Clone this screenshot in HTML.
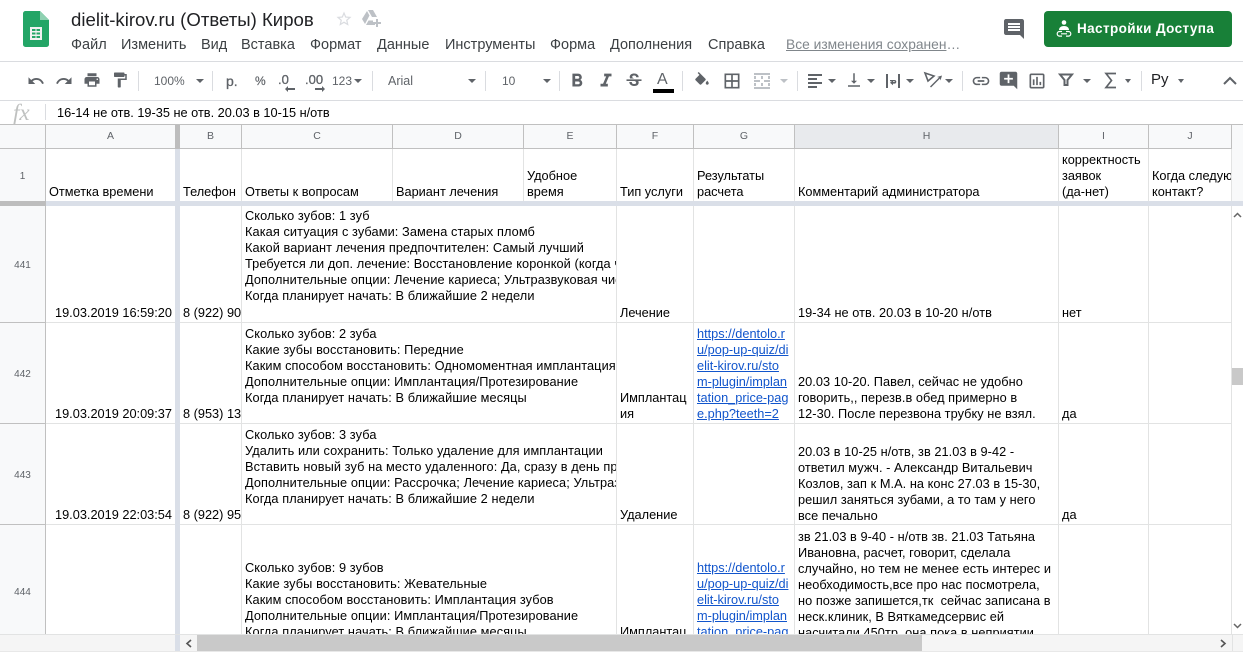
<!DOCTYPE html>
<html lang="ru"><head><meta charset="utf-8"><title>dielit-kirov.ru</title>
<style>
*{box-sizing:border-box}
html,body{margin:0;padding:0;background:#fff}
#p{position:relative;width:1243px;height:652px;overflow:hidden;background:#fff;font-family:"Liberation Sans",sans-serif;color:#000}
.a{position:absolute}
.m{position:absolute;top:37px;font-size:14.500px;line-height:16px;color:#3c4043;white-space:nowrap}
.tb{position:absolute;font-size:12px;line-height:16px;color:#5f6368;white-space:nowrap;top:73px}
.ic{position:absolute;fill:#5f6368}
.ar{position:absolute;top:79px;width:0;height:0;border-left:4px solid transparent;border-right:4px solid transparent;border-top:4px solid #5f6368}
.sp{position:absolute;top:71px;width:1px;height:20px;background:#dadce0}
.h{position:absolute;top:125px;height:24px;background:#f8f9fa;border-right:1px solid #c0c0c0;border-bottom:1px solid #c0c0c0;font-size:10.500px;line-height:23px;text-align:center;color:#5f6368}
.r{position:absolute;left:0;width:46px;background:#f8f9fa;border-right:1px solid #c0c0c0;border-bottom:1px solid #c0c0c0;font-size:10px;text-align:center;color:#5f6368;display:flex;align-items:center;justify-content:center;padding-top:3px}
.c{position:absolute;overflow:hidden;font-size:12.750px;line-height:16px;padding-left:3px;white-space:pre;color:#000;margin-top:1px}
.q{letter-spacing:.09px}
.n{letter-spacing:.05px}
.vl{position:absolute;top:149px;width:1px;height:486px;background:#e2e3e3}
.hl{position:absolute;left:46px;width:1186px;height:1px;background:#e2e3e3}
a{color:#1155cc;text-decoration:underline}
</style></head><body><div id="p">

<svg class="a" style="left:23px;top:11px" width="26" height="36" viewBox="0 0 26 36"><path d="M2.500 0H17l9 9v24.500a2.500 2.500 0 0 1-2.500 2.500h-21A2.500 2.500 0 0 1 0 33.500V2.500A2.500 2.500 0 0 1 2.500 0z" fill="#23a566"/><path d="M17 0l9 9h-9z" fill="#8ed1b1"/><path d="M7 16h12v13H7z" fill="#f1f1f1"/><path d="M9 18h3.500v2H9zM13.500 18H17v2h-3.500zM9 21.500h3.500v2H9zM13.500 21.500H17v2h-3.500zM9 25h3.500v2H9zM13.500 25H17v2h-3.500z" fill="#23a566"/></svg>
<div class="a" style="left:71px;top:9px;font-size:18.600px;line-height:22px;color:#202124;white-space:nowrap">dielit-kirov.ru (Ответы) Киров</div>
<svg class="a" style="left:335px;top:10px" width="18" height="18" viewBox="0 0 24 24"><path fill="#dadce0" d="M22 9.240l-7.190-.62L12 2 9.190 8.630 2 9.240l5.460 4.730L5.820 21 12 17.270 18.180 21l-1.630-7.030L22 9.240zM12 15.400l-3.760 2.270 1-4.280-3.320-2.880 4.380-.38L12 6.100l1.710 4.040 4.380.38-3.320 2.880 1 4.280L12 15.400z"/></svg>
<svg class="a" style="left:362px;top:10px" width="19" height="17" viewBox="0 0 19 17"><path fill="#bdc1c6" d="M6 0h5l4 7h-5zM5 1l2.500 4.500L3 14 0 9zM4 15l2.500-4.500H11v2.500h2v2z"/><path fill="#bdc1c6" d="M14 9h2v3h3v2h-3v3h-2v-3h-3v-2h3z"/></svg>

<div class="m" style="left:71px">Файл</div>
<div class="m" style="left:121px">Изменить</div>
<div class="m" style="left:201px">Вид</div>
<div class="m" style="left:241px">Вставка</div>
<div class="m" style="left:310px">Формат</div>
<div class="m" style="left:377px">Данные</div>
<div class="m" style="left:445px">Инструменты</div>
<div class="m" style="left:550px">Форма</div>
<div class="m" style="left:610px">Дополнения</div>
<div class="m" style="left:708px">Справка</div>
<div class="m" style="left:786px;font-size:13.800px;color:#80868b;text-decoration:underline">Все изменения сохранен<span style="display:inline-block;text-decoration:none">…</span></div>

<svg class="ic" style="left:1002px;top:17px" width="24" height="24" viewBox="0 0 24 24"><path d="M21.990 4c0-1.100-.89-2-1.990-2H4c-1.100 0-2 .9-2 2v12c0 1.100.9 2 2 2h14l4 4-.01-18zM18 14H6v-2h12v2zm0-3H6V9h12v2zm0-3H6V6h12v2z"/></svg>
<div class="a" style="left:1044px;top:11px;width:188px;height:36px;background:#188038;border-radius:4px"></div>
<svg class="a" style="left:1056px;top:19px" width="16" height="20" viewBox="0 0 16 20"><circle cx="8" cy="3.500" r="2.300" fill="#fff"/><path d="M3 11c0-2.500 2-4 5-4s5 1.500 5 4z" fill="#fff"/><path d="M6 12.500H3.500a2.300 2.300 0 0 0 0 4.600H6M10 12.500h2.500a2.300 2.300 0 0 1 0 4.600H10M5 14.800h6" fill="none" stroke="#fff" stroke-width="1.200"/></svg>
<div class="a" style="left:1077px;top:20px;font-size:13.500px;line-height:17px;font-weight:bold;letter-spacing:.4px;color:#fff;white-space:nowrap">Настройки Доступа</div>

<div class="a" style="left:0;top:61px;width:1243px;height:1px;background:#dadce0"></div>
<div class="a" style="left:0;top:100px;width:1243px;height:1px;background:#dadce0"></div>

<svg class="ic" style="left:27px;top:72px" width="18" height="18" viewBox="0 0 24 24"><path d="M12.500 8c-2.650 0-5.050.99-6.900 2.600L2 7v9h9l-3.620-3.620c1.390-1.160 3.160-1.880 5.120-1.880 3.540 0 6.550 2.310 7.600 5.500l2.370-.78C21.080 11.030 17.150 8 12.500 8z"/></svg>
<svg class="ic" style="left:55px;top:72px" width="18" height="18" viewBox="0 0 24 24"><path d="M18.400 10.600C16.550 8.990 14.150 8 11.500 8c-4.650 0-8.580 3.030-9.960 7.220L3.900 16c1.050-3.190 4.050-5.500 7.600-5.500 1.950 0 3.730.72 5.120 1.880L13 16h9V7l-3.600 3.600z"/></svg>
<svg class="ic" style="left:83px;top:71px" width="18" height="18" viewBox="0 0 24 24"><path d="M19 8H5c-1.660 0-3 1.340-3 3v6h4v4h12v-4h4v-6c0-1.660-1.340-3-3-3zm-3 11H8v-5h8v5zm3-7c-.55 0-1-.45-1-1s.45-1 1-1 1 .45 1 1-.45 1-1 1zm-1-9H6v4h12V3z"/></svg>
<svg class="ic" style="left:111px;top:71px" width="18" height="18" viewBox="0 0 24 24"><path d="M18 4V3c0-.55-.45-1-1-1H5c-.55 0-1 .45-1 1v4c0 .55.45 1 1 1h12c.55 0 1-.45 1-1V6h1v4H9v11c0 .55.45 1 1 1h2c.55 0 1-.45 1-1v-9h8V4h-3z"/></svg>
<div class="sp" style="left:138px"></div>
<div class="tb" style="left:154px">100%</div><div class="ar" style="left:196px"></div>
<div class="sp" style="left:212px"></div>
<div class="tb" style="left:226px;font-size:14px;-webkit-text-stroke:.3px #5f6368">р.</div>
<div class="tb" style="left:255px;font-size:12px;-webkit-text-stroke:.2px #5f6368">%</div>
<div class="tb" style="left:278px;font-size:13px;-webkit-text-stroke:.3px #5f6368;top:72px">.0</div>
<svg class="ic" style="left:285px;top:86px" width="10" height="6" viewBox="0 0 10 6"><path d="M0 3l3-3v2h7v2H3v2z"/></svg>
<div class="tb" style="left:305px;font-size:13px;-webkit-text-stroke:.3px #5f6368;top:72px">.00</div>
<svg class="ic" style="left:315px;top:86px" width="10" height="6" viewBox="0 0 10 6"><path d="M10 3L7 0v2H0v2h7v2z"/></svg>
<div class="tb" style="left:332px">123</div><div class="ar" style="left:354px;top:79px"></div>
<div class="sp" style="left:372px"></div>
<div class="tb" style="left:388px;font-size:12.500px">Arial</div><div class="ar" style="left:468px"></div>
<div class="sp" style="left:485px"></div>
<div class="tb" style="left:502px">10</div><div class="ar" style="left:543px"></div>
<div class="sp" style="left:559px"></div>
<svg class="ic" style="left:566px;top:70px" width="22" height="22" viewBox="0 0 24 24"><path d="M15.600 10.790c.97-.67 1.650-1.770 1.650-2.790 0-2.260-1.750-4-4-4H7v14h7.040c2.090 0 3.710-1.700 3.710-3.790 0-1.520-.86-2.820-2.150-3.420zM10 6.500h3c.83 0 1.500.67 1.500 1.500s-.67 1.500-1.500 1.500h-3v-3zm3.500 9H10v-3h3.500c.83 0 1.500.67 1.500 1.500s-.67 1.500-1.500 1.500z"/></svg>
<svg class="ic" style="left:595px;top:70px" width="22" height="22" viewBox="0 0 24 24"><path d="M10 4v3h2.210l-3.420 8H6v3h8v-3h-2.210l3.420-8H18V4z"/></svg>
<svg class="ic" style="left:624px;top:71px" width="20" height="20" viewBox="0 0 24 24"><path d="M7.240 8.750c-.26-.48-.39-1.030-.39-1.670 0-.61.13-1.160.4-1.670.26-.5.63-.93 1.110-1.290.48-.35 1.050-.63 1.700-.83.66-.19 1.390-.29 2.180-.29.81 0 1.540.11 2.210.34.66.22 1.230.54 1.690.94.47.4.83.88 1.080 1.430.25.55.38 1.150.38 1.810h-3.010c0-.31-.05-.59-.15-.85-.09-.27-.24-.49-.44-.68-.2-.19-.45-.33-.75-.44-.3-.1-.66-.16-1.060-.16-.39 0-.74.04-1.030.13-.29.09-.53.21-.72.36-.19.16-.34.34-.44.55-.1.21-.15.43-.15.66 0 .48.25.88.74 1.210.38.25.77.48 1.410.7H7.390c-.05-.08-.11-.17-.15-.25zM21 12v-2H3v2h9.620c.18.07.4.14.55.2.37.17.66.34.87.51.21.17.35.36.43.57.07.2.11.43.11.69 0 .23-.05.45-.14.66-.09.2-.23.38-.42.53-.19.15-.42.26-.71.35-.29.08-.63.13-1.010.13-.43 0-.83-.04-1.180-.13s-.66-.23-.91-.42c-.25-.19-.45-.44-.59-.75-.14-.31-.25-.76-.25-1.210H6.400c0 .55.08 1.130.24 1.580.16.45.37.85.65 1.210.28.35.6.66.98.92.37.26.78.48 1.220.65.44.17.9.3 1.380.39.48.08.96.13 1.440.13.8 0 1.530-.09 2.180-.28s1.210-.45 1.670-.79c.46-.34.82-.77 1.070-1.270s.38-1.070.38-1.710c0-.6-.1-1.140-.31-1.610-.05-.11-.11-.23-.17-.33H21z"/></svg>
<div class="tb" style="left:657px;top:72px;font-size:16px;color:#5f6368">A</div>
<div class="a" style="left:653px;top:89px;width:21px;height:4px;background:#000"></div>
<div class="sp" style="left:682px"></div>
<svg class="ic" style="left:693px;top:72px" width="18" height="18" viewBox="0 0 24 24"><path d="M16.560 8.940L7.620 0 6.210 1.410l2.380 2.380-5.150 5.150c-.59.59-.59 1.540 0 2.120l5.500 5.500c.29.29.68.44 1.060.44s.77-.15 1.060-.44l5.500-5.500c.59-.58.59-1.530 0-2.120zM19 11.500s-2 2.170-2 3.500c0 1.100.9 2 2 2s2-.9 2-2c0-1.330-2-3.500-2-3.500z"/></svg>
<svg class="ic" style="left:722px;top:71px" width="20" height="20" viewBox="0 0 24 24"><path d="M3 3v18h18V3H3zm8 16H5v-6h6v6zm0-8H5V5h6v6zm8 8h-6v-6h6v6zm0-8h-6V5h6v6z"/></svg>
<svg class="a" style="left:753px;top:72px" width="18" height="18" viewBox="0 0 18 18"><path fill="#bdc1c6" d="M1 1h16v2H1zM1 15h16v2H1zM1 4h2v3H1zM15 4h2v3h-2zM1 11h2v3H1zM15 11h2v3h-2zM8 4h2v3H8zM8 11h2v3H8zM1 8h6v2H1zM11 8h6v2h-6z"/></svg>
<div class="ar" style="left:780px;border-top-color:#bdc1c6"></div>
<div class="sp" style="left:797px"></div>
<svg class="ic" style="left:806px;top:72px" width="18" height="18" viewBox="0 0 18 18"><path d="M2 2h14v2H2zM2 6h9v2H2zM2 10h14v2H2zM2 14h9v2H2z"/></svg><div class="ar" style="left:828px"></div>
<svg class="ic" style="left:845px;top:71px" width="18" height="18" viewBox="0 0 24 24"><path d="M16 13h-3V3h-2v10H8l4 4 4-4zM4 19v2h16v-2H4z"/></svg><div class="ar" style="left:867px"></div>
<svg class="ic" style="left:884px;top:72px" width="18" height="18" viewBox="0 0 18 18"><path d="M2 2h2v14H2zM14 2h2v14h-2zM6 8h4.500a1.800 1.800 0 0 1 0 3.600H9v1.600l-3-2.400 3-2.400v1.600h1.500a.4.4 0 0 0 0-.8H6z"/></svg><div class="ar" style="left:906px"></div>
<svg class="a" style="left:923px;top:71px" width="20" height="20" viewBox="0 0 20 20"><path fill="none" stroke="#5f6368" stroke-width="1.600" d="M2 2l9 3-6 5z"/><path fill="#5f6368" d="M7 15.500L16 6.500l-2-.5 5-1.500-1.500 5-.5-2-9 9z"/></svg><div class="ar" style="left:945px"></div>
<div class="sp" style="left:962px"></div>
<svg class="ic" style="left:971px;top:71px" width="20" height="20" viewBox="0 0 24 24"><path d="M3.900 12c0-1.710 1.390-3.100 3.100-3.100h4V7H7c-2.760 0-5 2.240-5 5s2.240 5 5 5h4v-1.900H7c-1.710 0-3.100-1.390-3.100-3.100zM8 13h8v-2H8v2zm9-6h-4v1.900h4c1.710 0 3.100 1.390 3.100 3.100s-1.390 3.100-3.100 3.100h-4V17h4c2.760 0 5-2.240 5-5s-2.240-5-5-5z"/></svg>
<svg class="ic" style="left:998px;top:70px" width="21" height="21" viewBox="0 0 24 24"><path d="M21.990 4c0-1.100-.89-2-1.990-2H4c-1.100 0-2 .9-2 2v12c0 1.100.9 2 2 2h14l4 4-.01-18zM17 11h-4v4h-2v-4H7V9h4V5h2v4h4v2z"/></svg>
<svg class="ic" style="left:1027px;top:71px" width="20" height="20" viewBox="0 0 24 24"><path d="M19 3H5c-1.100 0-2 .9-2 2v14c0 1.100.9 2 2 2h14c1.100 0 2-.9 2-2V5c0-1.100-.9-2-2-2zm0 16H5V5h14v14zM9 10H7v7h2zm4-3h-2v10h2zm4 6h-2v4h2z"/></svg>
<svg class="a" style="left:1058px;top:72px" width="16" height="16" viewBox="0 0 16 16"><path fill="none" stroke="#5f6368" stroke-width="2" d="M2 2.500h12L9.500 8v5h-3V8z"/></svg><div class="ar" style="left:1083px"></div>
<svg class="a" style="left:1104px;top:72px" width="13" height="17" viewBox="0 0 13 17"><path fill="none" stroke="#5f6368" stroke-width="1.700" d="M12 1.500H2L7.500 8.500 2 15.500h10"/></svg><div class="ar" style="left:1125px;border-left-width:3px;border-right-width:3px"></div>
<div class="sp" style="left:1141px"></div>
<div class="tb" style="left:1151px;top:71px;font-size:15px;color:#202124;line-height:18px">Ру</div><div class="ar" style="left:1178px;border-left-width:3px;border-right-width:3px"></div>
<svg class="a" style="left:1222px;top:75px" width="16" height="11" viewBox="0 0 16 11"><path fill="none" stroke="#5f6368" stroke-width="2" d="M2 9l6-6 6 6"/></svg>

<div class="a" style="left:13px;top:102px;font-family:'Liberation Serif',serif;font-style:italic;font-size:23px;line-height:21px;color:#bfc1c0">fx</div>
<div class="a" style="left:45px;top:104px;width:1px;height:16px;background:#dadce0"></div>
<div class="a" style="left:57px;top:105px;font-size:12.750px;line-height:16px;white-space:nowrap;color:#000">16-14 не отв. 19-35 не отв. 20.03 в 10-15 н/отв</div>

<div class="a" style="left:0;top:124px;width:1243px;height:1px;background:#c0c0c0"></div>
<div class="a" style="left:0;top:125px;width:46px;height:24px;background:#f8f9fa;border-right:1px solid #c0c0c0;border-bottom:1px solid #c0c0c0"></div>
<div class="h" style="left:46px;width:130px">A</div>
<div class="a" style="left:175px;top:125px;width:5px;height:24px;background:#bdbdbd"></div>
<div class="h" style="left:180px;width:62px">B</div>
<div class="h" style="left:242px;width:151px">C</div>
<div class="h" style="left:393px;width:131px">D</div>
<div class="h" style="left:524px;width:93px">E</div>
<div class="h" style="left:617px;width:77px">F</div>
<div class="h" style="left:694px;width:101px">G</div>
<div class="h" style="left:795px;width:264px;background:#e8eaed">H</div>
<div class="h" style="left:1059px;width:90px">I</div>
<div class="h" style="left:1149px;width:83px">J</div>
<div class="a" style="left:1232px;top:125px;width:11px;height:81px;background:#f8f9fa"></div>

<div class="vl" style="left:241px"></div><div class="vl" style="left:392px;height:52px"></div><div class="vl" style="left:523px;height:52px"></div><div class="vl" style="left:616px"></div><div class="vl" style="left:693px"></div><div class="vl" style="left:794px"></div><div class="vl" style="left:1058px"></div><div class="vl" style="left:1148px"></div><div class="vl" style="left:1231px"></div>
<div class="hl" style="top:322px"></div><div class="hl" style="top:423px"></div><div class="hl" style="top:524px"></div>

<div class="r" style="top:149px;height:52px;border-bottom:0">1</div>
<div class="r" style="top:206px;height:117px">441</div>
<div class="r" style="top:323px;height:101px">442</div>
<div class="r" style="top:424px;height:101px">443</div>
<div class="r" style="top:525px;height:132px;border-bottom:0">444</div>

<div class="a" style="left:0;top:201px;width:46px;height:5px;background:#bdbdbd"></div>
<div class="a" style="left:46px;top:201px;width:1197px;height:5px;background:#dadfe8"></div>
<div class="a" style="left:175px;top:149px;width:5px;height:486px;background:#dadfe8"></div>

<div class="c" style="left:46px;top:183px;width:129px;height:16px">Отметка времени</div>
<div class="c" style="left:180px;top:183px;width:61px;height:16px">Телефон</div>
<div class="c" style="left:242px;top:183px;width:150px;height:16px">Ответы к вопросам</div>
<div class="c" style="left:393px;top:183px;width:130px;height:16px">Вариант лечения</div>
<div class="c" style="left:524px;top:167px;width:92px;height:32px">Удобное
время</div>
<div class="c" style="left:617px;top:183px;width:76px;height:16px">Тип услуги</div>
<div class="c" style="left:694px;top:167px;width:100px;height:32px">Результаты
расчета</div>
<div class="c" style="left:795px;top:183px;width:263px;height:16px">Комментарий администратора</div>
<div class="c" style="left:1059px;top:151px;width:89px;height:48px">корректность
заявок
(да-нет)</div>
<div class="c" style="left:1149px;top:167px;width:82px;height:32px">Когда следующий
контакт?</div>

<div class="c" style="left:46px;top:304px;width:129px;height:16px;text-align:right;padding:0 3px 0 0">19.03.2019 16:59:20</div>
<div class="c" style="left:180px;top:304px;width:61px;height:16px">8 (922) 900-00-00</div>
<div class="c q" style="left:242px;top:207px;width:374px;height:114px">Сколько зубов: 1 зуб
Какая ситуация с зубами: Замена старых пломб
Какой вариант лечения предпочтителен: Самый лучший
Требуется ли доп. лечение: Восстановление коронкой (когда чуть
Дополнительные опции: Лечение кариеса; Ультразвуковая чистка
Когда планирует начать: В ближайшие 2 недели</div>
<div class="c" style="left:617px;top:304px;width:76px;height:16px">Лечение</div>
<div class="c n" style="left:795px;top:304px;width:263px;height:16px">19-34 не отв. 20.03 в 10-20 н/отв</div>
<div class="c" style="left:1059px;top:304px;width:89px;height:16px">нет</div>

<div class="c" style="left:46px;top:405px;width:129px;height:16px;text-align:right;padding:0 3px 0 0">19.03.2019 20:09:37</div>
<div class="c" style="left:180px;top:405px;width:61px;height:16px">8 (953) 130-00-00</div>
<div class="c q" style="left:242px;top:325px;width:374px;height:97px">Сколько зубов: 2 зуба
Какие зубы восстановить: Передние
Каким способом восстановить: Одномоментная имплантация
Дополнительные опции: Имплантация/Протезирование
Когда планирует начать: В ближайшие месяцы</div>
<div class="c" style="left:617px;top:389px;width:76px;height:32px">Имплантац
ия</div>
<div class="c" style="left:694px;top:325px;width:100px;height:97px"><a>https://dentolo.r
u/pop-up-quiz/di
elit-kirov.ru/sto
m-plugin/implan
tation_price-pag
e.php?teeth=2</a></div>
<div class="c n" style="left:795px;top:373px;width:263px;height:48px">20.03 10-20. Павел, сейчас не удобно
говорить,, перезв.в обед примерно в
12-30. После перезвона трубку не взял.</div>
<div class="c" style="left:1059px;top:405px;width:89px;height:16px">да</div>

<div class="c" style="left:46px;top:506px;width:129px;height:16px;text-align:right;padding:0 3px 0 0">19.03.2019 22:03:54</div>
<div class="c" style="left:180px;top:506px;width:61px;height:16px">8 (922) 950-00-00</div>
<div class="c q" style="left:242px;top:426px;width:374px;height:97px">Сколько зубов: 3 зуба
Удалить или сохранить: Только удаление для имплантации
Вставить новый зуб на место удаленного: Да, сразу в день приема
Дополнительные опции: Рассрочка; Лечение кариеса; Ультразвуковая чистка
Когда планирует начать: В ближайшие 2 недели</div>
<div class="c" style="left:617px;top:506px;width:76px;height:16px">Удаление</div>
<div class="c n" style="left:795px;top:443px;width:263px;height:80px">20.03 в 10-25 н/отв, зв 21.03 в 9-42 -
ответил мужч. - Александр Витальевич
Козлов, зап к М.А. на конс 27.03 в 15-30,
решил заняться зубами, а то там у него
все печально</div>
<div class="c" style="left:1059px;top:506px;width:89px;height:16px">да</div>

<div class="c q" style="left:242px;top:559px;width:374px;height:75px">Сколько зубов: 9 зубов
Какие зубы восстановить: Жевательные
Каким способом восстановить: Имплантация зубов
Дополнительные опции: Имплантация/Протезирование
Когда планирует начать: В ближайшие месяцы</div>
<div class="c" style="left:617px;top:623px;width:76px;height:16px">Имплантац</div>
<div class="c" style="left:694px;top:559px;width:100px;height:80px"><a>https://dentolo.r
u/pop-up-quiz/di
elit-kirov.ru/sto
m-plugin/implan
tation_price-pag</a></div>
<div class="c n" style="left:795px;top:528px;width:263px;height:112px">зв 21.03 в 9-40 - н/отв зв. 21.03 Татьяна
Ивановна, расчет, говорит, сделала
случайно, но тем не менее есть интерес и
необходимость,все про нас посмотрела,
но позже запишется,тк  сейчас записана в
неск.клиник, В Вяткамедсервис ей
насчитали 450тр, она пока в неприятии</div>

<div class="a" style="left:1232px;top:206px;width:11px;height:429px;background:#fff"></div>
<svg class="a" style="left:1233px;top:212px" width="9" height="6" viewBox="0 0 9 6"><path fill="none" stroke="#666" stroke-width="1.500" d="M1 5l3.500-3.500L8 5"/></svg>
<div class="a" style="left:1232px;top:368px;width:11px;height:17px;background:#c9c9c9"></div>
<svg class="a" style="left:1233px;top:623px" width="9" height="6" viewBox="0 0 9 6"><path fill="none" stroke="#666" stroke-width="1.500" d="M1 1l3.500 3.500L8 1"/></svg>

<div class="a" style="left:0;top:634px;width:1243px;height:1px;background:#e2e3e3"></div>
<div class="a" style="left:0;top:635px;width:1243px;height:16px;background:#f5f5f5"></div>
<div class="a" style="left:175px;top:635px;width:5px;height:16px;background:#dadfe8"></div>
<svg class="a" style="left:185px;top:639px" width="7" height="9" viewBox="0 0 7 9"><path fill="none" stroke="#555" stroke-width="1.600" d="M6 1L2 4.500 6 8"/></svg>
<div class="a" style="left:197px;top:635px;width:725px;height:16px;background:#c9c9c9"></div>
<svg class="a" style="left:1220px;top:639px" width="7" height="9" viewBox="0 0 7 9"><path fill="none" stroke="#555" stroke-width="1.600" d="M1 1l4 3.500L1 8"/></svg>
<div class="a" style="left:1232px;top:635px;width:1px;height:16px;background:#e2e3e3"></div>
<div class="a" style="left:0;top:651px;width:1243px;height:1px;background:#e8e8e8"></div>

</div></body></html>
